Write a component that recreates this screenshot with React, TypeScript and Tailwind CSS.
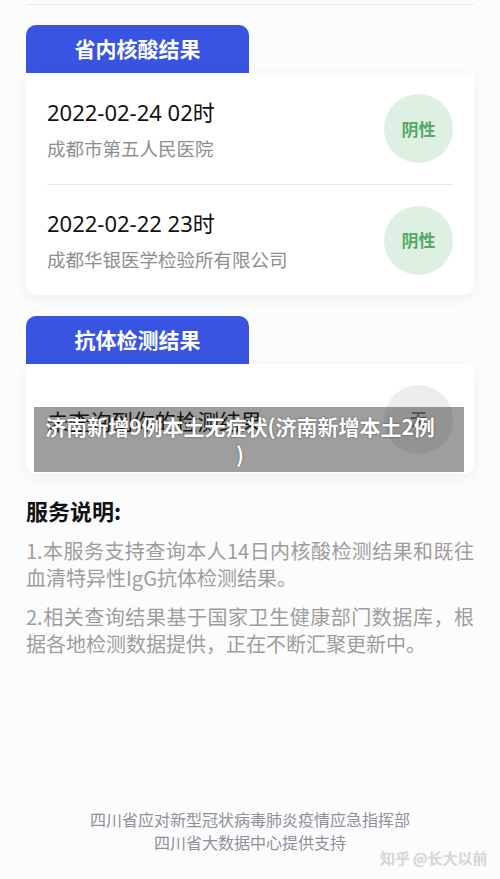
import React from 'react';

const font = { fontFamily: '"Noto Sans CJK SC", "Noto Sans", sans-serif' };

interface RecordRow {
  time: string;
  place: string;
}

const records: RecordRow[] = [
  { time: '2022-02-24 02时', place: '成都市第五人民医院' },
  { time: '2022-02-22 23时', place: '成都华银医学检验所有限公司' },
];

const Tab: React.FC<{ title: string }> = ({ title }) => (
  <div className="w-[223px] h-[48px] rounded-t-[10px] bg-[#3954e0] flex items-center justify-center text-white text-[21px] font-bold">
    {title}
  </div>
);

const Badge: React.FC<{ text: string; grey?: boolean }> = ({ text, grey }) => (
  <div
    className={
      grey
        ? 'w-[69px] h-[69px] rounded-full bg-[#ededed] flex items-center justify-center text-[17px] font-bold text-[#8a8a8a]'
        : 'w-[69px] h-[69px] rounded-full bg-[#ddf0e2] flex items-center justify-center text-[17px] font-bold text-[#55a866]'
    }
  >
    {text}
  </div>
);

export default function App() {
  return (
    <div className="relative w-[500px] h-[879px] overflow-hidden bg-[#fcfcfd]" style={font}>
      {/* 上一张卡片的底边 */}
      <div className="mx-[26px] mt-[4px] h-px bg-[#e9e9ec]" />

      {/* 省内核酸结果 */}
      <div className="mx-[26px] mt-[20px]">
        <Tab title="省内核酸结果" />
        <div className="bg-white rounded-b-[10px] shadow-[0_4px_16px_rgba(0,0,0,0.055)] px-[21px]">
          {records.map((r, i) => (
            <div
              key={r.time}
              className={
                i === 0
                  ? 'h-[112px] flex items-center justify-between border-b border-[#e6e6e9]'
                  : 'h-[110px] flex items-center justify-between'
              }
            >
              <div className="flex flex-col gap-[8px]">
                <div
                  className="text-[22px] leading-[30px] text-[#111]"
                  style={{ fontFamily: '"Noto Sans", "Noto Sans CJK SC", sans-serif' }}
                >
                  {r.time}
                </div>
                <div className="text-[18.5px] leading-[26px] text-[#8e8e8e]">{r.place}</div>
              </div>
              <Badge text="阴性" />
            </div>
          ))}
        </div>
      </div>

      {/* 抗体检测结果 */}
      <div className="mx-[26px] mt-[21px]">
        <Tab title="抗体检测结果" />
        <div className="bg-white rounded-b-[10px] shadow-[0_4px_16px_rgba(0,0,0,0.055)] px-[21px] h-[110px] flex items-center justify-between">
          <div className="text-[21.5px] leading-[30px] text-[#222] mt-[4px]">未查询到你的检测结果</div>
          <Badge text="无" grey />
        </div>
      </div>

      {/* 服务说明 */}
      <div className="mx-[26px] mt-[21px]">
        <div className="text-[22px] leading-[30px] font-bold text-[#111]">服务说明:</div>
        <div className="mt-[12px] flex flex-col gap-[12px] text-[20px] leading-[27px] text-[#9d9d9d] text-justify">
          <p>1.本服务支持查询本人14日内核酸检测结果和既往血清特异性IgG抗体检测结果。</p>
          <p>2.相关查询结果基于国家卫生健康部门数据库，根据各地检测数据提供，正在不断汇聚更新中。</p>
        </div>
      </div>

      {/* 底部 */}
      <div className="absolute left-0 right-0 top-[808px] flex flex-col items-center text-[16px] leading-[23px] text-[#8c919a]">
        <div>四川省应对新型冠状病毒肺炎疫情应急指挥部</div>
        <div>四川省大数据中心提供支持</div>
      </div>
      <div className="absolute left-[380px] top-[848px] text-[15px] leading-[20px] text-[#dadada] [text-shadow:0_0_1px_rgba(0,0,0,0.3)]">
        知乎 @长大以前
      </div>

      {/* 标题遮罩 */}
      <div className="absolute left-[34px] top-[407px] w-[430px] h-[65px] pr-[18px] bg-[rgba(0,0,0,0.38)] flex flex-col items-center justify-center text-white text-[21px] leading-[28px] font-bold [text-shadow:0_0_2px_rgba(0,0,0,0.55)]">
        <div>济南新增9例本土无症状(济南新增本土2例</div>
        <div>)</div>
      </div>
    </div>
  );
}
